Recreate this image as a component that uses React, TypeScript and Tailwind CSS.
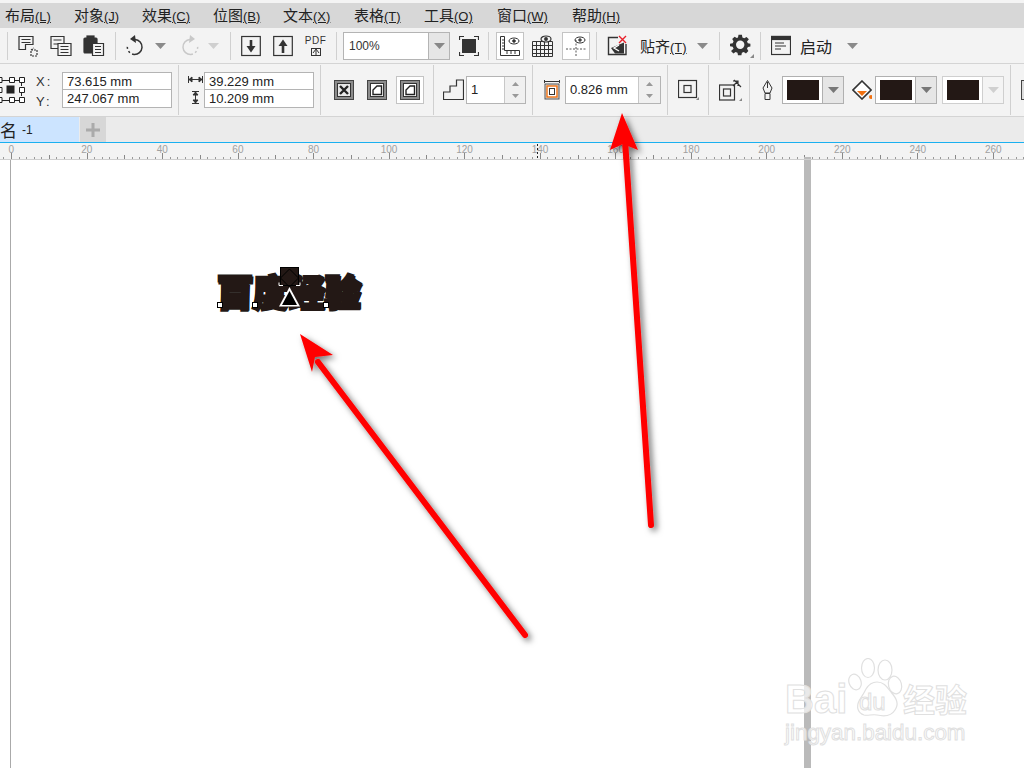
import React from "react";

const Sep = ({ ml, h = "h-[28px]" }: { ml: number; h?: string }) => (
  <div className={`w-px bg-[#d0d0d0] shrink-0 ${h}`} style={{ marginLeft: ml }} />
);
const Caret = ({ ml = 0, c = "#8a8a8a" }: { ml?: number; c?: string }) => (
  <svg width="11" height="6" style={{ marginLeft: ml }} className="shrink-0"><path d="M0 0h11L5.500 6z" fill={c} /></svg>
);
const Ic = ({ ml, w = 22, h = 22, children }: { ml: number; w?: number; h?: number; children: React.ReactNode }) => (
  <svg width={w} height={h} viewBox={`0 0 ${w} ${h}`} style={{ marginLeft: ml }} className="shrink-0" fill="none" stroke="#333" strokeWidth="1.2">
    {children}
  </svg>
);

const menu: [string, string, number][] = [
  ["布局", "(L)", 69], ["对象", "(J)", 68], ["效果", "(C)", 71], ["位图", "(B)", 70],
  ["文本", "(X)", 71], ["表格", "(T)", 70], ["工具", "(O)", 73], ["窗口", "(W)", 75], ["帮助", "(H)", 60],
];

const FrameBtn = ({ ml, children }: { ml: number; children: React.ReactNode }) => (
  <div className="w-[28px] h-[28px] bg-white border border-[#c4c4c4] flex items-center justify-center shrink-0" style={{ marginLeft: ml }}>
    {children}
  </div>
);

const Spin = ({ ml, w, text, tw }: { ml: number; w: number; text: string; tw: number }) => (
  <div className="h-[28px] border border-[#b4b4b4] flex shrink-0 bg-[#f0f0f0]" style={{ marginLeft: ml, width: w }}>
    <div className="bg-white h-full flex items-center pl-[4px] text-[13px] text-[#222] border-r border-[#c8c8c8]" style={{ width: tw }}>{text}</div>
    <div className="flex-1 flex flex-col items-center justify-center gap-[8px]">
      <svg width="7" height="4"><path d="M0 4h7L3.500 0z" fill="#999" /></svg>
      <svg width="7" height="4"><path d="M0 0h7L3.500 4z" fill="#999" /></svg>
    </div>
  </div>
);

const ColorCombo = ({ ml, light }: { ml: number; light?: boolean }) => (
  <div className={`w-[62px] h-[28px] border flex shrink-0 ${light ? "border-[#cfcfcf]" : "border-[#b0b0b0]"}`} style={{ marginLeft: ml }}>
    <div className="w-[39px] h-full bg-white flex items-center justify-center"><div className="w-[32px] h-[20px] bg-[#231815]" /></div>
    <div className={`flex-1 flex items-center justify-center border-l ${light ? "bg-[#f4f4f4] border-[#cfcfcf]" : "bg-[#e6e6e6] border-[#b0b0b0]"}`}>
      <Caret c={light ? "#d0d0d0" : "#777"} />
    </div>
  </div>
);

const NestSquare = ({ ml, variant }: { ml: number; variant: number }) => (
  <svg width="20" height="20" style={{ marginLeft: ml }} className="shrink-0">
    <rect x="0.500" y="0.500" width="19" height="19" fill="#8c8c8c" stroke="#444" />
    <rect x="3.500" y="3.500" width="13" height="13" fill={variant === 0 ? "#e8e8e8" : "#fff"} stroke="#333" />
    {variant === 0 && <path d="M6 6l8 8M14 6l-8 8" stroke="#222" strokeWidth="2.400" />}
    {variant === 1 && <path d="M6 14.500V10l4-4h4.500v8.500z" fill="#fff" stroke="#222" strokeWidth="1.400" />}
  </svg>
);

const ticks = Array.from({ length: 140 }, (_, i) => i - 1);

export default function App() {
  return (
    <div className="relative w-[1024px] h-[768px] overflow-hidden bg-white font-['Noto_Sans_CJK_SC','Liberation_Sans',sans-serif] text-[#222]">
      {/* top sliver */}
      <div className="h-[3px] bg-[#f4f4f4]" />
      {/* menu */}
      <div className="h-[25px] bg-[#d7d7d7] flex items-center pl-[5px] pb-[2px]">
        {menu.map(([a, b, w]) => (
          <div key={a} className="shrink-0 flex items-baseline text-[15px] text-[#222] leading-none" style={{ width: w }}>
            {a}<span className="text-[13px] underline font-['Liberation_Sans',sans-serif]">{b}</span>
          </div>
        ))}
      </div>
      {/* toolbar 1 */}
      <div className="h-[36px] bg-[#f3f3f3] border-b border-[#d4d4d4] flex items-center">
        <Sep ml={7} />
        <Ic ml={9}><path d="M2 1.500h14v8H8.500v5H2z M4.500 4.500h9M4.500 7.500h9" /><path d="M14 15h6v6h-6zM14 15l3-2" strokeDasharray="2 1" /></Ic>
        <Ic ml={11}><path d="M1 1.500h13v12H1z M3.500 5h8M3.500 9h8" /><path d="M8 8.500h13v12H8z" fill="#f3f3f3" /><path d="M10.500 11.500h8M10.500 14.500h8M10.500 17.500h8" /></Ic>
        <Ic ml={11}><rect x="1" y="3" width="13" height="15" rx="1" fill="#333" /><rect x="4" y="1" width="7" height="3" fill="#333" /><path d="M9.500 8.500h11v12h-11z" fill="#f3f3f3" /><path d="M12 11.500h6M12 14.500h6M12 17.500h6" /></Ic>
        <Sep ml={10} />
        <Ic ml={9}><path d="M10 4.500a7.500 7.500 0 1 1-1 15" strokeWidth="1.500" /><path d="M9 19.500a7.500 7.500 0 0 1-6.500-9" strokeWidth="1.500" strokeDasharray="2 2.500" /><path d="M10 0l1 8-6-4z" fill="#333" stroke="none" /></Ic>
        <Caret ml={8} />
        <svg width="22" height="22" className="ml-[12px] shrink-0" fill="none" stroke="#c8c8c8" strokeWidth="1.500"><path d="M12 4.500a7.500 7.500 0 1 0 1 15" /><path d="M13 19.500a7.500 7.500 0 0 0 6.500-9" strokeDasharray="2 2.500" /><path d="M12 0l-1 8 6-4z" fill="#c8c8c8" stroke="none" /></svg>
        <Caret ml={8} c="#cfcfcf" />
        <Sep ml={11} />
        <Ic ml={10} w={20}><rect x="0.700" y="1.500" width="18.600" height="19" /><path d="M10 5v8" strokeWidth="2.600" /><path d="M5.500 11h9L10 17.500z" fill="#333" stroke="none" /></Ic>
        <Ic ml={12} w={20}><rect x="0.700" y="1.500" width="18.600" height="19" /><path d="M10 10v8" strokeWidth="2.600" /><path d="M5.500 11h9L10 4.500z" fill="#333" stroke="none" /></Ic>
        <div className="ml-[12px] w-[21px] shrink-0 flex flex-col items-center leading-none">
          <span className="text-[10px] font-['Liberation_Sans',sans-serif] text-[#333] tracking-[0.5px]">PDF</span>
          <svg width="10" height="9" className="mt-[1px]"><rect x="0.500" y="1.500" width="9" height="7" fill="none" stroke="#333" /><path d="M2 6l3-4 3 4M5 3v5" stroke="#333" fill="none" /></svg>
        </div>
        <Sep ml={10} />
        <div className="ml-[6px] w-[107px] h-[28px] border border-[#b4b4b4] flex shrink-0">
          <div className="w-[84px] bg-white flex items-center pl-[5px] text-[12px] font-['Liberation_Sans',sans-serif] text-[#333]">100%</div>
          <div className="flex-1 bg-[#e6e6e6] border-l border-[#b4b4b4] flex items-center justify-center"><Caret c="#888" /></div>
        </div>
        <Ic ml={9} w={20}><rect x="3" y="4" width="14" height="14" fill="#333" stroke="none" /><path d="M0.500 5V1.500H5M15 1.500h4.500V5M0.500 17v3.500H5M15 20.500h4.500V17" /></Ic>
        <Sep ml={9} />
        <FrameBtn ml={7}>
          <svg width="22" height="22" fill="none" stroke="#333"><path d="M1.500 1.500h4v14h15v5h-19z" /><path d="M3 5h2M3 8h2M3 11h2M3 14h2M8 16v3M12 16v3M16 16v3" /><ellipse cx="15" cy="6" rx="5" ry="3" /><circle cx="15" cy="6" r="1.300" fill="#333" /></svg>
        </FrameBtn>
        <Ic ml={8} w={21}><path d="M0.500 6.500h20v15h-20zM0.500 10.500h20M0.500 14.500h20M0.500 18.500h20M4.500 6.500v15M8.500 6.500v15M12.500 6.500v15M16.500 6.500v15" fill="none" strokeWidth="1" /><ellipse cx="14" cy="4" rx="5" ry="3" fill="#f3f3f3" /><circle cx="14" cy="4" r="1.300" fill="#333" /></Ic>
        <FrameBtn ml={9}>
          <svg width="22" height="22" fill="none" stroke="#555" strokeDasharray="2 1.500"><path d="M11 5v16M1 14h20" /><ellipse cx="15" cy="5" rx="5" ry="3" strokeDasharray="0" stroke="#333" /><circle cx="15" cy="5" r="1.300" fill="#333" strokeDasharray="0" /></svg>
        </FrameBtn>
        <Sep ml={6} />
        <Ic ml={10}><path d="M11 2.500H1.500v17H19V9" strokeWidth="1.400" /><path d="M17 7.500v11H8L4 13z" fill="#333" stroke="none" /><path d="M12 10l-5 3 5 3" stroke="#fff" strokeWidth="1.400" /><path d="M12 1l7 7M19 1l-7 7" stroke="#e8202a" strokeWidth="1.400" /></Ic>
        <span className="ml-[11px] w-[57px] text-[15px] shrink-0 leading-none flex items-baseline">贴齐<span className="text-[13px] underline font-['Liberation_Sans',sans-serif]">(T)</span></span>
        <Caret ml={0} />
        <Sep ml={11} />
        <svg width="24" height="24" viewBox="0 0 24 24" className="ml-[10px] shrink-0">
          <path d="M10 1h4l.6 3 2.200 1 2.600-1.600 2.800 2.800L20 8.800l1 2.200 3 .6v3l-3 .6-1 2.200 1.600 2.600-2.800 2.800-2.600-1.600-2.200 1-.6 2.800h-4l-.6-2.800-2.200-1-2.600 1.600-2.800-2.800L4.200 17.400 3.200 15 0 14.400v-3l3.200-.6 1-2.200-1.600-2.600 2.800-2.800L8 4.800l1.400-.8z" fill="#333" transform="scale(0.85)" />
          <circle cx="10.200" cy="10.800" r="4.200" fill="#f3f3f3" />
          <path d="M24 20v4h-4z" fill="#888" />
        </svg>
        <Sep ml={6} />
        <Ic ml={10} w={20}><rect x="0.500" y="1.500" width="19" height="18" /><rect x="0.500" y="1.500" width="19" height="3" fill="#333" /><path d="M4 8h9M4 11h11M4 14h6" /></Ic>
        <span className="ml-[9px] w-[47px] text-[16px] shrink-0 leading-none">启动</span>
        <Caret />
      </div>
      {/* toolbar 2 */}
      <div className="h-[53px] bg-[#f3f3f3] border-b border-[#d4d4d4] flex items-center font-['Liberation_Sans',sans-serif] text-[13px]">
        <svg width="25" height="28" className="shrink-0" fill="#fff" stroke="#222">
          <path d="M2 4.500h7M15 4.500h4M2 24.500h7M15 24.500h4M21.500 7v3M21.500 17v3" fill="none" />
          <path d="M-3 1.500h5v5h-5zM9.500 1.500h5v5h-5zM19.500 1.500h5v5h-5zM19.500 11.500h5v5h-5zM19.500 21.500h5v5h-5zM9.500 21.500h5v5h-5zM-3 21.500h5v5h-5zM-3 11.500h5v5h-5z" />
          <rect x="7" y="10" width="7" height="7" fill="#222" />
        </svg>
        <div className="ml-[11px] w-[26px] h-[36px] shrink-0 flex flex-col justify-around text-[#333] text-[13px] tracking-[2px]">
          <span>X:</span><span>Y:</span>
        </div>
        <div className="w-[110px] h-[36px] border border-[#b4b4b4] bg-white flex flex-col shrink-0">
          <div className="h-[17px] pl-[4px] border-b border-[#b4b4b4] leading-[17px]">73.615 mm</div>
          <div className="flex-1 pl-[4px] leading-[18px]">247.067 mm</div>
        </div>
        <Sep ml={6} h="h-[50px]" />
        <div className="ml-[8px] w-[17px] h-[36px] shrink-0 flex flex-col items-center justify-around">
          <svg width="15" height="7" stroke="#333" fill="#333"><path d="M.5 0v7M14.500 0v7M1 3.500h13" /><path d="M1 3.500l3-2.500v5zM14 3.500l-3-2.500v5z" /></svg>
          <svg width="7" height="13" stroke="#333" fill="#333"><path d="M0 .5h7M0 12.500h7M3.500 1v11" /><path d="M3.500 1l-2.500 3h5zM3.500 12l-2.500-3h5z" /></svg>
        </div>
        <div className="w-[110px] h-[36px] border border-[#b4b4b4] bg-white flex flex-col shrink-0">
          <div className="h-[17px] pl-[4px] border-b border-[#b4b4b4] leading-[17px]">39.229 mm</div>
          <div className="flex-1 pl-[4px] leading-[18px]">10.209 mm</div>
        </div>
        <Sep ml={6} h="h-[50px]" />
        <NestSquare ml={13} variant={0} />
        <NestSquare ml={13} variant={1} />
        <FrameBtn ml={9}>
          <NestSquare ml={0} variant={1} />
        </FrameBtn>
        <Sep ml={9} h="h-[50px]" />
        <Ic ml={9} w={21}><path d="M.5 20.500V13h6.500V7h6.500V1h7v19.500z" /></Ic>
        <Spin ml={2} w={60} text="1" tw={38} />
        <Sep ml={6} h="h-[50px]" />
        <svg width="16" height="20" className="ml-[11px] shrink-0" fill="none">
          <path d="M.5 0v3M15.500 0v3M1 1.500h14" stroke="#333" />
          <rect x="1" y="4" width="14" height="15" stroke="#555" fill="#e0e0e0" />
          <rect x="3" y="6" width="10" height="11" stroke="#f07010" strokeWidth="1.400" fill="#fff" />
          <rect x="5.500" y="8.500" width="5" height="6" stroke="#333" />
        </svg>
        <Spin ml={5} w={96} text="0.826 mm" tw={73} />
        <Sep ml={6} h="h-[50px]" />
        <Ic ml={10} w={21}><rect x=".5" y="1.500" width="18" height="17" /><rect x="6" y="6.500" width="7" height="7" /><path d="M21 18v3h-3z" fill="#888" stroke="none" /></Ic>
        <Sep ml={9} h="h-[50px]" />
        <Ic ml={10} w={23}><rect x=".5" y="6" width="15" height="15" /><rect x="4.500" y="10" width="7" height="7" /><path d="M14 2h5v5M19 2l-5 5M15 1l7 7" /><path d="M23 19v4h-4z" fill="#888" stroke="none" /></Ic>
        <Sep ml={7} h="h-[50px]" />
        <svg width="11" height="20" className="ml-[12px] shrink-0" fill="none" stroke="#333"><path d="M5.500 .5L1 8l2 5h5l2-5zM5.500 2v6M3 13.500h5v6H3z" /></svg>
        <ColorCombo ml={9} />
        <svg width="20" height="20" className="ml-[8px] shrink-0" fill="none"><path d="M10 1l9 9-9 9-9-9z" stroke="#333" strokeWidth="1.600" fill="#fff" /><path d="M5 11h10l-5 5z" fill="#f07010" /><circle cx="19" cy="17" r="2" fill="#f07010" /></svg>
        <ColorCombo ml={3} />
        <ColorCombo ml={5} light />
        <Sep ml={6} h="h-[50px]" />
        <div className="ml-[10px] w-[12px] h-[20px] border border-[#444] border-r-0 bg-[#ddd] shrink-0" />
      </div>
      {/* tabs */}
      <div className="h-[25px] bg-[#ebebeb] flex items-stretch">
        <div className="w-[79px] bg-[#cce4ff] flex items-center text-[17px] leading-none">
          <span>名</span><span className="ml-[5px] text-[12px] font-['Liberation_Sans',sans-serif]">-1</span>
        </div>
        <div className="ml-px w-[26px] bg-[#d7d7d7] flex items-center justify-center">
          <svg width="14" height="14"><path d="M7 0v14M0 7h14" stroke="#aaa" strokeWidth="3" /></svg>
        </div>
      </div>
      {/* ruler */}
      <div className="h-px bg-[#1ab0f0]" />
      <div className="h-[17px] bg-[#f3f3f3] border-b border-[#cfcfcf]">
        <svg width="1024" height="16" className="block">
          {ticks.map((i) => {
            const x = Math.round(11 + i * 2 * 3.777);
            const major = i % 10 === 0;
            const mid = i % 5 === 0;
            return <rect key={i} x={x} y={major ? 10 : mid ? 12 : 14} width="1" height={major ? 6 : mid ? 4 : 2} fill={major || mid ? "#888" : "#999"} />;
          })}
          {Array.from({ length: 14 }, (_, i) => (
            <text key={i} x={11.3 + i * 75.54} y="10" textAnchor="middle" fontSize="10" fill="#a0a0a0" fontFamily="Liberation Sans, sans-serif">{i * 20}</text>
          ))}
          <rect x="804" y="14" width="7" height="2" fill="#bbb" />
          <path d="M537.500 1v15" stroke="#222" strokeDasharray="2 2" />
        </svg>
      </div>
      {/* canvas */}
      <div className="h-[608px] bg-white flex">
        <div className="ml-[10px] w-px bg-[#aaa]" />
        <div className="ml-[793px] w-[7px] bg-[#bababa]" />
      </div>

      {/* selected text object */}
      <svg width="170" height="70" className="absolute left-[205px] top-[260px]">
        <g fontSize="36" fontWeight="900" fill="#231815" stroke="#231815" strokeWidth="2.800" strokeLinejoin="miter" strokeMiterlimit="5" fontFamily="Noto Sans CJK SC, sans-serif">
          <text x="11" y="47" transform="skewX(-3) translate(3 0)">百度经验</text>
          <text x="12" y="46">百度经验</text>
        </g>
        <rect x="75.500" y="7.500" width="18" height="18" fill="#231815" stroke="#000" />
        <path d="M84.500 9l9 9-9 9-9-9z" fill="none" stroke="#000" />
        <path d="M74 22.500v3h4M91 25.500h4v-3" stroke="#fff" fill="none" />
        <path d="M84.500 27L95 46.500H74z" fill="#fff" />
        <path d="M84.500 31L92 45H77z" fill="#000" />
        <rect x="12.500" y="42.500" width="5" height="5" fill="#fff" stroke="#000" />
        <rect x="47.500" y="42.500" width="5" height="5" fill="#fff" stroke="#000" />
        <rect x="118.500" y="42.500" width="5" height="5" fill="#fff" stroke="#000" />
      </svg>

      {/* watermark */}
      <div className="absolute left-[785px] top-[655px] w-[210px] h-[110px] text-white/70 font-['Liberation_Sans',sans-serif] [-webkit-text-stroke:1px_#e0e0e0]">
        <svg width="56" height="62" className="absolute left-[63px] top-[3px]" fill="none" stroke="#e0e0e0" strokeWidth="1.200">
          <ellipse cx="7" cy="24" rx="6" ry="8" transform="rotate(-20 7 24)" />
          <ellipse cx="20" cy="10" rx="6.500" ry="9.500" />
          <ellipse cx="37" cy="12" rx="7" ry="10" />
          <ellipse cx="47" cy="27" rx="6.500" ry="9" transform="rotate(-15 47 27)" />
          <path d="M29 24c7 0 10 5 14 10 6 7 8 12 4 18-3 5-9 7-18 5-5-1-9 1-13 0-6-2-8-8-5-14 3-5 4-6 7-12 3-5 6-7 11-7z" />
        </svg>
        <span className="absolute left-0 top-[24px] text-[40px] font-bold leading-none">Bai</span>
        <span className="absolute left-[74px] top-[35px] text-[24px] leading-none">du</span>
        <span className="absolute left-[118px] top-[21px] text-[32px] font-bold leading-[44px] font-['Noto_Sans_CJK_SC',sans-serif]">经验</span>
        <span className="absolute left-0 top-[67px] text-[22.400px] leading-none">jingyan.baidu.com</span>
      </div>

      {/* arrows */}
      <svg width="1024" height="768" className="absolute left-0 top-0 pointer-events-none">
        <defs>
          <filter id="sh" x="-30%" y="-30%" width="160%" height="160%">
            <feDropShadow dx="3" dy="3" stdDeviation="3" floodColor="#000" floodOpacity="0.55" />
          </filter>
        </defs>
        <g filter="url(#sh)">
          <path d="M651 525L625 140" stroke="#ff0000" strokeWidth="6" strokeLinecap="round" />
          <path d="M622 113L638 150L623 144L610 150z" fill="#ff0000" />
          <path d="M525 635L318 362" stroke="#ff0000" strokeWidth="6" strokeLinecap="round" />
          <path d="M300 334L333 355L315 357L312 372z" fill="#ff0000" />
        </g>
      </svg>
    </div>
  );
}
